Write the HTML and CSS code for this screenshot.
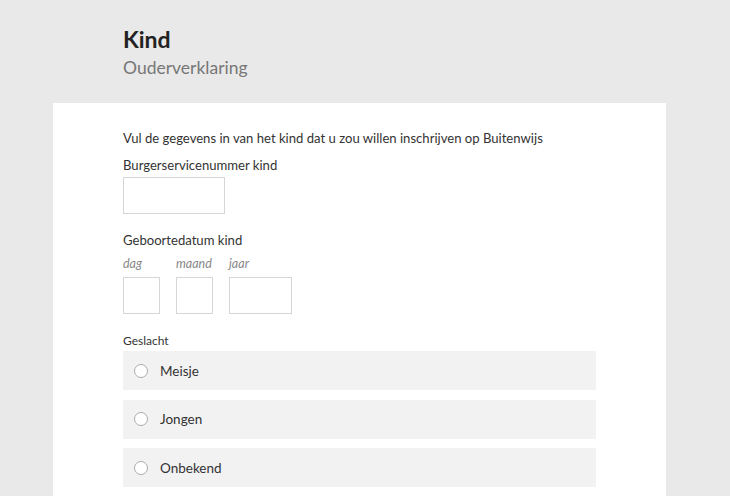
FILE: index.html
```html
<!DOCTYPE html>
<html lang="nl">
<head>
<meta charset="utf-8">
<title>Kind - Ouderverklaring</title>
<link rel="stylesheet" href="styles.css">
</head>
<body>
<header class="page-head">
  <h1 class="title">Kind</h1>
  <p class="subtitle">Ouderverklaring</p>
</header>
<main class="card">
  <p class="intro">Vul de gegevens in van het kind dat u zou willen inschrijven op Buitenwijs</p>
  <div class="field">
    <label class="label">Burgerservicenummer kind</label>
    <input class="input bsn" type="text">
  </div>
  <div class="field date-field">
    <label class="label">Geboortedatum kind</label>
    <div class="date-row">
      <div class="date-part">
        <span class="hint">dag</span>
        <input class="input sq" type="text">
      </div>
      <div class="date-part">
        <span class="hint">maand</span>
        <input class="input sq" type="text">
      </div>
      <div class="date-part">
        <span class="hint">jaar</span>
        <input class="input year" type="text">
      </div>
    </div>
  </div>
  <div class="field gender">
    <span class="small-label">Geslacht</span>
    <div class="options">
      <label class="option"><span class="radio"></span><span class="opt-text">Meisje</span></label>
      <label class="option"><span class="radio"></span><span class="opt-text">Jongen</span></label>
      <label class="option"><span class="radio"></span><span class="opt-text">Onbekend</span></label>
    </div>
  </div>
</main>
</body>
</html>
```
FILE: styles.css
```css
* { box-sizing: border-box; }
html, body { margin: 0; padding: 0; }
body {
  background: #e9e9e9;
  font-family: Lato, "Open Sans", sans-serif;
  color: #333;
  height: 496px;
  overflow: hidden;
}
.page-head {
  padding: 24px 0 0 123px;
  height: 103px;
}
.title {
  margin: 0;
  font-size: 23px;
  font-weight: 700;
  line-height: 30px;
  color: #222;
}
.subtitle {
  margin: 0;
  font-size: 17.5px;
  line-height: 28px;
  color: #777;
}
.card {
  margin-left: 53px;
  width: 613px;
  background: #fff;
  padding: 24px 70px 0 70px;
  min-height: 400px;
}
.intro {
  margin: 0 0 6px 0;
  font-size: 13.1px;
  line-height: 22px;
}
.label {
  display: block;
  font-size: 13.1px;
  line-height: 20px;
  margin-bottom: 2px;
}
.input {
  display: block;
  height: 37px;
  border: 1px solid #d6d6d6;
  background: #fff;
  margin: 0;
  padding: 0;
}
.bsn { width: 102px; }
.date-field { margin-top: 16px; }
.date-row { display: flex; gap: 16px; }
.date-part { display: flex; flex-direction: column; }
.hint {
  font-style: italic;
  font-size: 12.5px;
  color: #888;
  line-height: 20px;
  margin-top: 2px;
  margin-bottom: 3px;
}
.sq { width: 37px; }
.year { width: 63px; }
.gender { margin-top: 17px; }
.small-label {
  display: block;
  font-size: 12px;
  line-height: 20px;
}
.options { display: flex; flex-direction: column; gap: 9.5px; }
.option {
  display: flex;
  align-items: center;
  height: 39px;
  width: 473px;
  background: #f2f2f2;
  padding-left: 11px;
}
.radio {
  width: 14px;
  height: 14px;
  border: 1px solid #aaa;
  border-radius: 50%;
  background: #fff;
  margin-right: 12px;
}
.opt-text { font-size: 13.5px; color: #333; }
```
